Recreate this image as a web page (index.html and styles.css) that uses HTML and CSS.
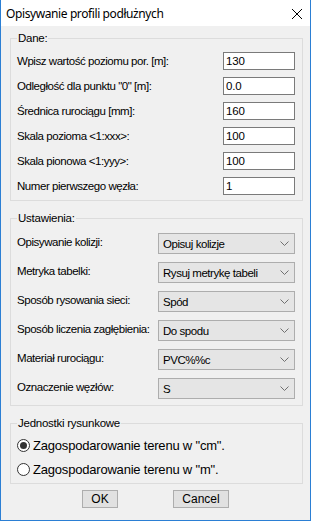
FILE: index.html
```html
<!DOCTYPE html>
<html lang="pl">

<head>
    <meta charset="UTF-8">
    <meta name="viewport" content="width=device-width, initial-scale=1.0">
    <title>Opisywanie profili podłużnych</title>
    <link rel="stylesheet" href="styles.css">
</head>

<body>

    <div class="window">
        <div class="titlebar">
            <span class="title">Opisywanie profili podłużnych</span>
            <span class="close">
                <svg width="12" height="12" viewBox="0 0 12 12">
                    <path d="M1 1 L11 11 M11 1 L1 11" stroke="#000" stroke-width="1" fill="none" />
                </svg>
            </span>
        </div>

        <div class="client">
            <fieldset class="group group-dane">
                <legend>Dane:</legend>
                <div class="row"><label>Wpisz wartość poziomu por. [m]:</label><input class="textbox" type="text" value="130"></div>
                <div class="row"><label>Odległość dla punktu "0" [m]:</label><input class="textbox" type="text" value="0.0"></div>
                <div class="row"><label>Średnica rurociągu [mm]:</label><input class="textbox" type="text" value="160"></div>
                <div class="row"><label>Skala pozioma &lt;1:xxx&gt;:</label><input class="textbox" type="text" value="100"></div>
                <div class="row"><label>Skala pionowa &lt;1:yyy&gt;:</label><input class="textbox" type="text" value="100"></div>
                <div class="row"><label>Numer pierwszego węzła:</label><input class="textbox" type="text" value="1"></div>
            </fieldset>

            <fieldset class="group group-ustawienia">
                <legend>Ustawienia:</legend>
                <div class="row combo-row"><label>Opisywanie kolizji:</label><div class="combo"><span>Opisuj kolizje</span><svg class="chevron" width="9" height="5" viewBox="0 0 9 5"><polyline points="0.5,0.5 4.5,4.5 8.5,0.5" /></svg></div></div>
                <div class="row combo-row"><label>Metryka tabelki:</label><div class="combo"><span>Rysuj metrykę tabeli</span><svg class="chevron" width="9" height="5" viewBox="0 0 9 5"><polyline points="0.5,0.5 4.5,4.5 8.5,0.5" /></svg></div></div>
                <div class="row combo-row"><label>Sposób rysowania sieci:</label><div class="combo"><span>Spód</span><svg class="chevron" width="9" height="5" viewBox="0 0 9 5"><polyline points="0.5,0.5 4.5,4.5 8.5,0.5" /></svg></div></div>
                <div class="row combo-row"><label>Sposób liczenia zagłębienia:</label><div class="combo"><span>Do spodu</span><svg class="chevron" width="9" height="5" viewBox="0 0 9 5"><polyline points="0.5,0.5 4.5,4.5 8.5,0.5" /></svg></div></div>
                <div class="row combo-row"><label>Materiał rurociągu:</label><div class="combo"><span>PVC%%c</span><svg class="chevron" width="9" height="5" viewBox="0 0 9 5"><polyline points="0.5,0.5 4.5,4.5 8.5,0.5" /></svg></div></div>
                <div class="row combo-row"><label>Oznaczenie węzłów:</label><div class="combo"><span>S</span><svg class="chevron" width="9" height="5" viewBox="0 0 9 5"><polyline points="0.5,0.5 4.5,4.5 8.5,0.5" /></svg></div></div>
            </fieldset>

            <fieldset class="group group-jednostki">
                <legend>Jednostki rysunkowe</legend>
                <div class="radio-row"><span class="radio checked"></span><span>Zagospodarowanie terenu w "cm".</span></div>
                <div class="radio-row"><span class="radio"></span><span>Zagospodarowanie terenu w "m".</span></div>
            </fieldset>

            <div class="buttons">
                <button class="btn btn-ok">OK</button>
                <button class="btn btn-cancel">Cancel</button>
            </div>
        </div>
    </div>

</body>

</html>
```

FILE: styles.css
```css
* {
    box-sizing: border-box;
}

body {
    margin: 0;
    font-family: "Liberation Sans", Arial, sans-serif;
    font-size: 11.5px;
    letter-spacing: -0.45px;
    color: #000;
    background: #fff;
}

.window {
    width: 311px;
    height: 521px;
    border: 1px solid #2b7fd4;
    border-top: none;
    display: flex;
    flex-direction: column;
}

.titlebar {
    height: 26px;
    background: #fff;
    display: flex;
    align-items: center;
    justify-content: space-between;
    padding: 0 7px 0 5px;
}

.title {
    font-family: "Noto Sans", sans-serif;
    font-size: 12px;
    letter-spacing: -0.4px;
    color: #000;
}

.close {
    display: flex;
    align-items: center;
    width: 12px;
    height: 12px;
    margin-top: 1px;
}

.client {
    flex: 1;
    background: #f0f0f0;
    padding: 6px 7px 0 9px;
    display: flex;
    flex-direction: column;
}

/* group boxes */
.group {
    margin: 0;
    min-width: 0;
    border: 1px solid #dcdcdc;
    border-radius: 0;
    padding: 7px 7px 5px 6px;
    display: flex;
    flex-direction: column;
}

.group legend {
    padding: 0 1px;
    line-height: 13px;
    font-size: 11.5px;
    letter-spacing: -0.25px;
    color: #000;
}

.group-dane {
    gap: 7px;
}

.group-ustawienia {
    margin-top: 11px;
    padding-top: 8px;
    padding-bottom: 6px;
    gap: 8px;
}

.group-jednostki {
    margin-top: 11px;
    padding-top: 7px;
    padding-bottom: 6px;
    gap: 8px;
}

.row {
    display: flex;
    align-items: center;
    justify-content: space-between;
    height: 18px;
}

.row label {
    white-space: nowrap;
}

.textbox {
    width: 72px;
    height: 18px;
    border: 1px solid #7a7a7a;
    background: #fff;
    padding: 0 2px;
    font-family: "Liberation Sans", Arial, sans-serif;
    font-size: 11.5px;
    letter-spacing: -0.2px;
    color: #000;
    outline: none;
}

.combo-row {
    height: 21px;
}

.combo-row label {
    margin-top: -3px;
}

.combo {
    width: 137px;
    height: 21px;
    background: #e5e5e5;
    border: 1px solid #adadad;
    display: flex;
    align-items: center;
    justify-content: space-between;
    padding: 0 5px 0 4px;
    font-size: 11.5px;
    letter-spacing: -0.45px;
}

.chevron {
    fill: none;
    stroke: #707070;
    stroke-width: 1;
}

/* radio buttons */
.radio-row {
    display: flex;
    align-items: center;
    height: 16px;
    gap: 3px;
    font-size: 13px;
    letter-spacing: -0.2px;
}

.radio {
    width: 13px;
    height: 13px;
    border: 1px solid #333;
    border-radius: 50%;
    background: #fff;
    display: flex;
    align-items: center;
    justify-content: center;
}

.radio.checked::after {
    content: "";
    width: 7px;
    height: 7px;
    border-radius: 50%;
    background: #333;
}

/* buttons */
.buttons {
    display: flex;
    justify-content: center;
    gap: 55px;
    margin-top: 6px;
    padding-right: 2px;
}

.btn {
    height: 18px;
    background: #e1e1e1;
    border: 1px solid #adadad;
    font-family: "Liberation Sans", Arial, sans-serif;
    font-size: 12px;
    letter-spacing: 0;
    color: #000;
    padding: 0;
}

.btn-ok {
    width: 36px;
}

.btn-cancel {
    width: 56px;
}
```
